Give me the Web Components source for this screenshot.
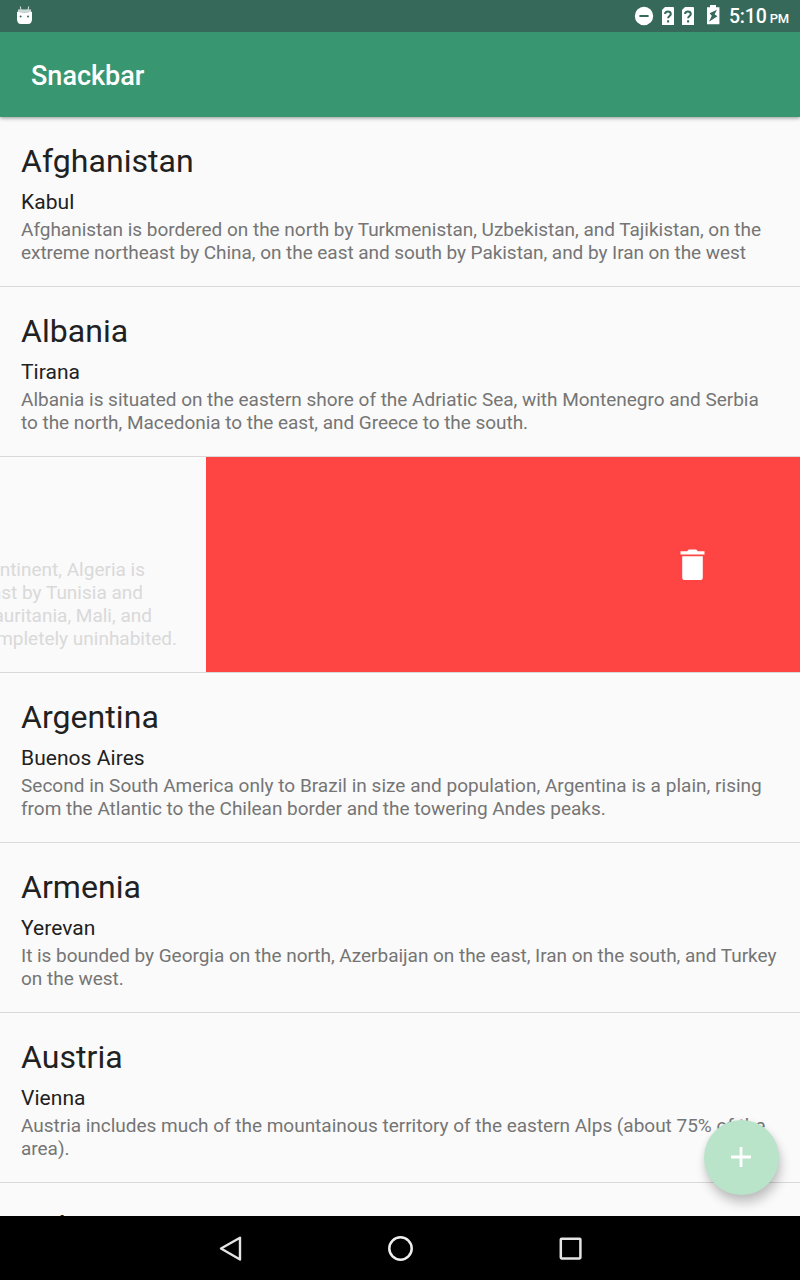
<!DOCTYPE html>
<html lang="en">
<head>
<meta charset="utf-8">
<title>Snackbar</title>
<style>
html, body { margin: 0; height: 100%; overflow: hidden; }
body { font-family: Roboto, "Liberation Sans", sans-serif; background: #fafafa; }
</style>
</head>
<body>
<snack-app></snack-app>
<script>
function define(name, html) {
  const t = document.createElement('template');
  t.innerHTML = html;
  customElements.define(name, class extends HTMLElement {
    constructor() {
      super();
      this.attachShadow({ mode: 'open' }).appendChild(t.content.cloneNode(true));
    }
  });
}

define('status-bar', `
<style>
:host { display: flex; height: 32px; background: #36695a; color: #fff; align-items: center; box-sizing: border-box; padding: 0 11px 0 16px; position: relative; z-index: 2; }
svg { display: block; flex: none; }
.gap { flex: 1; }
.time { font-size: 19.5px; font-weight: 500; line-height: 32px; padding-top: 3px; margin-left: 9px; white-space: nowrap; letter-spacing: -.15px; }
small { font-size: 13px; margin-left: 3px; letter-spacing: -.2px; }
</style>
<svg width="17" height="20" viewBox="0 0 17 20"><path d="M4.3 .5 5 4M12.7 .5 12 4" stroke="#d3dfdb" stroke-width="1.1"/><path d="M2 3.4h13v3H2z" fill="#c9d8d3"/><path d="M1 5.8q7.5 1.5 15 0v7.2q0 5-4 5H5q-4 0-4-5z" fill="#fff"/><circle cx="4.6" cy="10.4" r="1" fill="#36695a"/><circle cx="12" cy="10.4" r="1" fill="#36695a"/></svg>
<span class="gap"></span>
<svg width="20" height="20" viewBox="0 0 20 20"><circle cx="10" cy="10" r="9.2" fill="#fff"/><path d="M5.4 10h9.2" stroke="#36695a" stroke-width="2"/></svg>
<svg style="margin:-1px 0 0 7px" width="13" height="19" viewBox="0 0 13 19"><path d="M4 .9h8.1q.9 0 .9.9v17.1H1V4z" fill="#fff"/><path d="M4.1 8q0-2.5 2.8-2.5T9.8 8c0 2-2.7 2-2.7 4.3M7.1 14.2v2.2" fill="none" stroke="#36695a" stroke-width="2"/></svg>
<svg style="margin:-1px 0 0 7px" width="13" height="19" viewBox="0 0 13 19"><path d="M4 .9h8.1q.9 0 .9.9v17.1H1V4z" fill="#fff"/><path d="M4.1 8q0-2.5 2.8-2.5T9.8 8c0 2-2.7 2-2.7 4.3M7.1 14.2v2.2" fill="none" stroke="#36695a" stroke-width="2"/></svg>
<svg style="margin:-3px 0 0 12px" width="14" height="20" viewBox="0 0 14 20"><path d="M4 0h6v2.2h3.4v17H1v-17h3z" fill="#fff"/><path d="M11 4.8 3.6 8.2l2.2 2.6-2.8 6 8.4-5.6-2.8-2z" fill="#36695a"/></svg>
<span class="time"><slot></slot><small>PM</small></span>`);

define('app-toolbar', `
<style>
:host { display: flex; align-items: center; height: 85px; padding: 2px 0 0 31px; box-sizing: border-box; background: #389670; color: #fff; font-size: 27px; font-weight: 500; box-shadow: 0 1px 4px rgba(0,0,0,.42); position: relative; z-index: 1; }
</style><slot></slot>`);

define('country-row', `
<style>
:host { display: block; box-sizing: border-box; height: 170px; padding: 21px 0 0 21px; border-bottom: 1px solid #d9d9d9; color: #212121; white-space: nowrap; flex: none; }
.name { font-size: 32px; line-height: 46px; letter-spacing: .06px; }
.capital { font-size: 21px; line-height: 36px; margin-bottom: -2px; letter-spacing: .05px; }
.about { font-size: 19px; line-height: 23px; color: #757575; letter-spacing: -.018px; }
</style>
<div class="name"><slot name="name"></slot></div>
<div class="capital"><slot name="capital"></slot></div>
<div class="about"><slot></slot></div>`);

define('swiped-row', `
<style>
:host { display: flex; box-sizing: border-box; height: 216px; border-bottom: 1px solid #d9d9d9; overflow: hidden; flex: none; }
.content { width: 206px; flex: none; overflow: hidden; box-sizing: border-box; padding-top: 101px; font-size: 19px; line-height: 23px; color: #d9d9d9; white-space: nowrap; display: flex; flex-direction: column; align-items: flex-end; }
.delete { flex: 1; background: #ff4444; display: flex; align-items: center; justify-content: flex-end; padding-right: 95px; }
svg { display: block; }
</style>
<div class="content"><slot></slot></div>
<div class="delete"><svg width="25" height="32" viewBox="0 0 25 32"><path d="M.5 2.3h6.6L8.8.5h7.4l1.7 1.8h6.6v3.1H.5zM2.2 7.2h20.6v21.2q0 2.6-2.8 2.6H5q-2.8 0-2.8-2.6z" fill="#fff"/></svg></div>`);

define('add-button', `
<style>
:host { display: flex; align-items: center; justify-content: center; width: 75px; height: 75px; border-radius: 50%; background: #b9e4c9; box-shadow: 2px 8px 11px rgba(0,0,0,.22), 0 1px 6px rgba(0,0,0,.06); }
svg { display: block; margin: 0 1px 1px 0; }
</style>
<svg width="20" height="20" viewBox="0 0 20 20"><path d="M0 10h20M10 0v20" stroke="#fff" stroke-width="2.8"/></svg>`);

define('nav-bar', `
<style>
:host { display: flex; height: 64px; background: #000; justify-content: center; align-items: center; }
div { width: 170px; display: flex; justify-content: center; }
svg { display: block; }
</style>
<div><svg width="28" height="28" viewBox="0 0 28 28"><path d="M5 14.5 24 3.7v21.8z" fill="none" stroke="#e4e4e4" stroke-width="2.4" stroke-linejoin="round"/></svg></div>
<div><svg width="28" height="28" viewBox="0 0 28 28"><circle cx="14.5" cy="14.5" r="11.2" fill="none" stroke="#eee" stroke-width="2.5"/></svg></div>
<div><svg width="28" height="28" viewBox="0 0 28 28"><rect x="4.8" y="4.8" width="19.6" height="19.6" rx=".8" fill="none" stroke="#e4e4e4" stroke-width="2.5"/></svg></div>`);

define('snack-app', `
<style>
:host { display: flex; flex-direction: column; width: 800px; height: 1280px; overflow: hidden; position: relative; }
status-bar, app-toolbar, nav-bar { flex: none; }
main { flex: 1; min-height: 0; overflow: hidden; display: flex; flex-direction: column; background: #fafafa; }
nav-bar { position: relative; z-index: 1; }
add-button { position: absolute; left: 704px; top: 1120px; }
.tight { letter-spacing: -.05px; }
.wide { letter-spacing: .02px; }
</style>
<status-bar>5:10</status-bar>
<app-toolbar>Snackbar</app-toolbar>
<main>
<country-row><span slot="name">Afghanistan</span><span slot="capital">Kabul</span>Afghanistan is bordered on the north by Turkmenistan, Uzbekistan, and Tajikistan, on the<br><span class="tight">extreme northeast by China, on the east and south by Pakistan, and by Iran on the west</span></country-row>
<country-row><span slot="name">Albania</span><span slot="capital">Tirana</span>Albania is situated on the eastern shore of the Adriatic Sea, with Montenegro and Serbia<br><span style="letter-spacing:-.035px">to the north, Macedonia to the east, and Greece to the south.</span></country-row>
<swiped-row><span style="margin-right:61px">continent, Algeria is</span><span style="margin-right:63px">east by Tunisia and</span><span style="margin-right:54px">Mauritania, Mali, and</span><span style="margin-right:29px">completely uninhabited.</span></swiped-row>
<country-row><span slot="name">Argentina</span><span slot="capital">Buenos Aires</span><span class="wide">Second in South America only to Brazil in size and population, Argentina is a plain, rising</span><br>from the Atlantic to the Chilean border and the towering Andes peaks.</country-row>
<country-row><span slot="name">Armenia</span><span slot="capital">Yerevan</span><span style="letter-spacing:-.03px">It is bounded by Georgia on the north, Azerbaijan on the east, Iran on the south, and Turkey</span><br>on the west.</country-row>
<country-row><span slot="name">Austria</span><span slot="capital">Vienna</span>Austria includes much of the mountainous territory of the eastern Alps (about 75% of the<br>area).</country-row>
<country-row><span slot="name">Bahrain</span></country-row>
</main>
<add-button></add-button>
<nav-bar></nav-bar>`);
</script>
</body>
</html>
